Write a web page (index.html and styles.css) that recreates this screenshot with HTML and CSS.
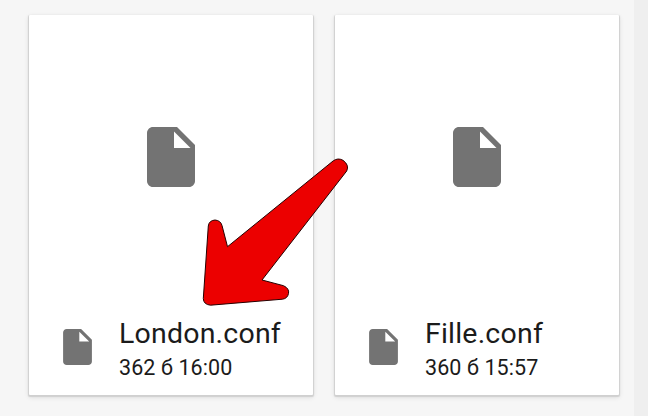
FILE: index.html
```html
<!DOCTYPE html>
<html lang="ru">
<head>
<meta charset="utf-8">
<title>Files</title>
<link rel="stylesheet" href="styles.css">
</head>
<body>
<svg width="0" height="0" class="defs">
  <symbol id="file" viewBox="4 2 16 20">
    <path d="M6 2c-1.1 0-2 .9-2 2v16c0 1.1.9 2 2 2h12c1.1 0 2-.9 2-2V8l-6-6H6zm7 7V3.5L18.5 9H13z"/>
  </symbol>
</svg>
<main class="files">
  <article class="card">
    <div class="preview"><svg class="icon-large"><use href="#file"/></svg></div>
    <div class="info">
      <svg class="icon-small"><use href="#file"/></svg>
      <div class="text">
        <div class="name">London.conf</div>
        <div class="meta">362 б 16:00</div>
      </div>
    </div>
  </article>
  <article class="card">
    <div class="preview"><svg class="icon-large"><use href="#file"/></svg></div>
    <div class="info">
      <svg class="icon-small"><use href="#file"/></svg>
      <div class="text">
        <div class="name">Fille.conf</div>
        <div class="meta">360 б 15:57</div>
      </div>
    </div>
  </article>
</main>
<svg class="arrow" viewBox="190 145 170 170">
  <path d="M333.3 160.8Q338 157.5 343 160.3Q349.5 165 346.7 171L262 280L283.500 285.700Q289.500 288.500 288.500 293.500Q287.500 298.500 282.500 299.200L210.500 305.200Q203.500 304.500 203.300 298.500L208.300 226Q209 220.500 215 220Q220.700 220.500 222 225.500L227.500 246.700Z"/>
</svg>
</body>
</html>
```
FILE: styles.css
```css
* {
  box-sizing: border-box;
}

body {
  margin: 0;
  width: 648px;
  height: 416px;
  overflow: hidden;
  position: relative;
  background: linear-gradient(to right, #f6f6f6 634px, #efefef 634px);
  font-family: Roboto, "Liberation Sans", sans-serif;
  color: #1b1b1b;
}

.defs {
  position: absolute;
}

.files {
  display: grid;
  grid-template-columns: 284px 284px;
  column-gap: 22px;
  padding: 15px 0 0 29px;
}

.card {
  height: 380px;
  display: flex;
  flex-direction: column;
  background: #fff;
  border-radius: 1px;
  box-shadow: 0 1px 1px 1px #d0d0d0, 0 2px 5px #d6d6d6;
}

.preview {
  height: 285px;
  display: flex;
  align-items: center;
  justify-content: center;
}

.icon-large {
  width: 48px;
  height: 60px;
  margin-top: -2px;
  fill: #737373;
}

.info {
  flex: 1;
  display: flex;
  align-items: flex-start;
  padding-left: 34px;
}

.icon-small {
  width: 29px;
  height: 36px;
  margin: 29px 27px 0 0;
  fill: #737373;
}

.text {
  padding-top: 16px;
  white-space: nowrap;
}

.name {
  font-size: 28.5px;
  line-height: 36px;
  letter-spacing: 0.2px;
}

.meta {
  font-size: 21.5px;
  line-height: 32px;
  letter-spacing: 0.1px;
}

.arrow {
  position: absolute;
  left: 190px;
  top: 145px;
  width: 170px;
  height: 170px;
}

.arrow path {
  fill: #ec0000;
  stroke: #250000;
  stroke-width: 1;
  stroke-linejoin: round;
}
```
